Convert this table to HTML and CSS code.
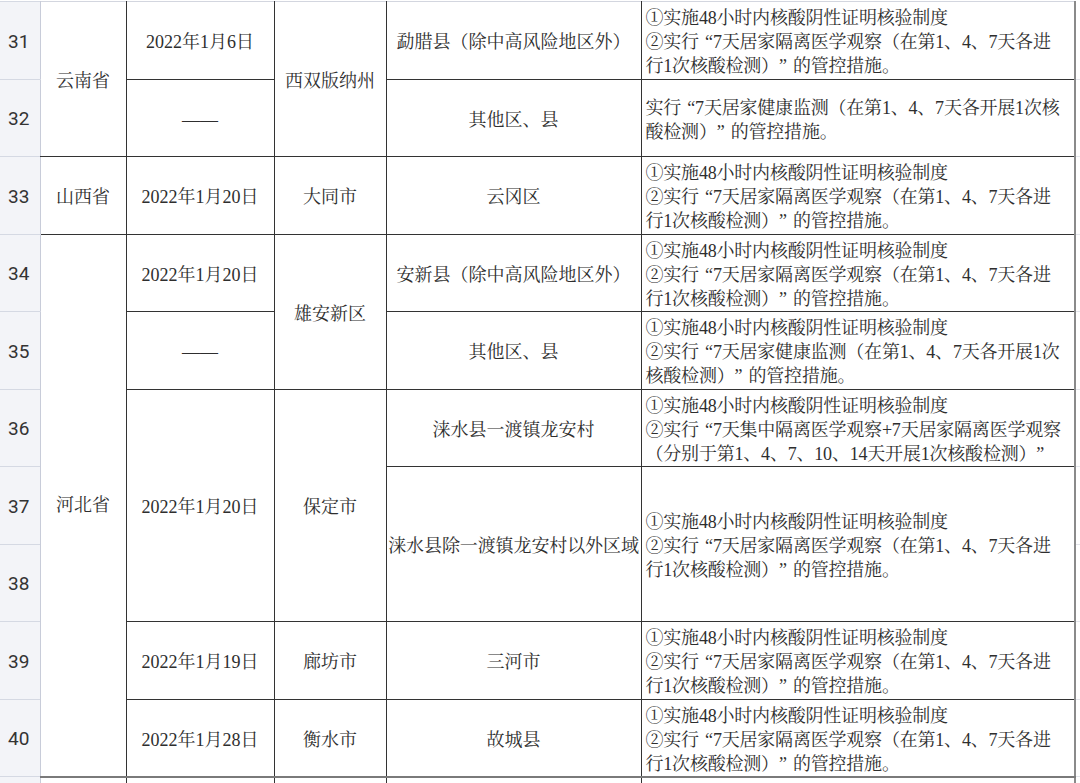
FILE: index.html
```html
<!DOCTYPE html>
<html lang="zh-CN">
<head>
<meta charset="utf-8">
<title>管控措施</title>
<link rel="stylesheet" href="styles.css">
</head>
<body>
<div class="sheet">
<table class="grid">
  <colgroup>
    <col class="c-rh"><col class="c-a"><col class="c-b"><col class="c-c"><col class="c-d"><col class="c-e"><col class="c-x">
  </colgroup>
  <tbody>
    <tr class="r first">
      <th class="rh">31</th>
      <td class="prov" rowspan="2">云南省</td>
      <td class="cen">2022年1月6日</td>
      <td class="cen" rowspan="2">西双版纳州</td>
      <td class="cen">勐腊县（除中高风险地区外）</td>
      <td class="txt">①实施48小时内核酸阴性证明核验制度<br>②实行<span class="ql">“</span>7天居家隔离医学观察（在第1、4、7天各进<br>行1次核酸检测）<span class="qr">”</span>的管控措施。</td>
      <td class="x"></td>
    </tr>
    <tr class="r">
      <th class="rh">32</th>
      <td class="cen">——</td>
      <td class="cen">其他区、县</td>
      <td class="txt">实行<span class="ql">“</span>7天居家健康监测（在第1、4、7天各开展1次核<br>酸检测）<span class="qr">”</span>的管控措施。</td>
      <td class="x"></td>
    </tr>
    <tr class="r">
      <th class="rh">33</th>
      <td class="prov">山西省</td>
      <td class="cen">2022年1月20日</td>
      <td class="cen">大同市</td>
      <td class="cen">云冈区</td>
      <td class="txt">①实施48小时内核酸阴性证明核验制度<br>②实行<span class="ql">“</span>7天居家隔离医学观察（在第1、4、7天各进<br>行1次核酸检测）<span class="qr">”</span>的管控措施。</td>
      <td class="x"></td>
    </tr>
    <tr class="r">
      <th class="rh">34</th>
      <td class="prov hebei" rowspan="7">河北省</td>
      <td class="cen">2022年1月20日</td>
      <td class="cen" rowspan="2">雄安新区</td>
      <td class="cen">安新县（除中高风险地区外）</td>
      <td class="txt">①实施48小时内核酸阴性证明核验制度<br>②实行<span class="ql">“</span>7天居家隔离医学观察（在第1、4、7天各进<br>行1次核酸检测）<span class="qr">”</span>的管控措施。</td>
      <td class="x"></td>
    </tr>
    <tr class="r">
      <th class="rh">35</th>
      <td class="cen">——</td>
      <td class="cen">其他区、县</td>
      <td class="txt">①实施48小时内核酸阴性证明核验制度<br>②实行<span class="ql">“</span>7天居家健康监测（在第1、4、7天各开展1次<br>核酸检测）<span class="qr">”</span>的管控措施。</td>
      <td class="x"></td>
    </tr>
    <tr class="r">
      <th class="rh">36</th>
      <td class="cen" rowspan="3">2022年1月20日</td>
      <td class="cen" rowspan="3">保定市</td>
      <td class="cen">涞水县一渡镇龙安村</td>
      <td class="txt">①实施48小时内核酸阴性证明核验制度<br>②实行<span class="ql">“</span>7天集中隔离医学观察+7天居家隔离医学观察<br>（分别于第1、4、7、10、14天开展1次核酸检测）<span class="qr">”</span></td>
      <td class="x"></td>
    </tr>
    <tr class="r">
      <th class="rh">37</th>
      <td class="cen tight" rowspan="2">涞水县除一渡镇龙安村以外区域</td>
      <td class="txt" rowspan="2">①实施48小时内核酸阴性证明核验制度<br>②实行<span class="ql">“</span>7天居家隔离医学观察（在第1、4、7天各进<br>行1次核酸检测）<span class="qr">”</span>的管控措施。</td>
      <td class="x"></td>
    </tr>
    <tr class="r">
      <th class="rh">38</th>
      <td class="x"></td>
    </tr>
    <tr class="r">
      <th class="rh">39</th>
      <td class="cen">2022年1月19日</td>
      <td class="cen">廊坊市</td>
      <td class="cen">三河市</td>
      <td class="txt">①实施48小时内核酸阴性证明核验制度<br>②实行<span class="ql">“</span>7天居家隔离医学观察（在第1、4、7天各进<br>行1次核酸检测）<span class="qr">”</span>的管控措施。</td>
      <td class="x"></td>
    </tr>
    <tr class="r last">
      <th class="rh">40</th>
      <td class="cen">2022年1月28日</td>
      <td class="cen">衡水市</td>
      <td class="cen">故城县</td>
      <td class="txt">①实施48小时内核酸阴性证明核验制度<br>②实行<span class="ql">“</span>7天居家隔离医学观察（在第1、4、7天各进<br>行1次核酸检测）<span class="qr">”</span>的管控措施。</td>
      <td class="x"></td>
    </tr>
    <tr class="tail">
      <th class="rh"></th>
      <td class="blank"></td>
      <td></td>
      <td></td>
      <td></td>
      <td></td>
      <td class="x"></td>
    </tr>
  </tbody>
</table>
</div>
</body>
</html>
```

FILE: styles.css
```css
html, body {
  margin: 0;
  padding: 0;
  background: #ffffff;
  overflow: hidden;
}

.sheet {
  width: 1080px;
  height: 783px;
  overflow: hidden;
  padding-top: 1px;
  box-sizing: border-box;
}

.grid {
  width: 1080px;
  table-layout: fixed;
  border-collapse: collapse;
  font-family: "Liberation Serif", "Noto Serif CJK SC", "Noto Sans CJK SC", serif;
  font-size: 18px;
  line-height: 24px;
  color: #2e2e2e;
}

.c-rh { width: 40px; }
.c-a { width: 86px; }
.c-b { width: 148px; }
.c-c { width: 112px; }
.c-d { width: 255px; }
.c-e { width: 434px; }
.c-x { width: 5px; }

.r { height: 77.5px; }
.tail { height: 20px; }

.grid td {
  padding: 4px 0 0 0;
  border: 1px solid #333333;
  vertical-align: middle;
  white-space: nowrap;
  overflow: hidden;
}

.first td { border-top: 1px solid #d3d6df; }

.rh {
  background: #f3f4f8;
  border-top: 1px solid #d5d9e3;
  border-bottom: 1px solid #d5d9e3;
  border-right: 1px solid #c8ccd9;
  border-left: none;
  font-family: Roboto, "Noto Sans", sans-serif;
  font-weight: 400;
  font-size: 19px;
  line-height: 24px;
  color: #333333;
  text-align: center;
  padding: 3px 2px 0 0;
}

.grid td.prov {
  text-align: center;
  border-left: 1px solid #c8ccd9;
}

.grid td.hebei {
  padding-top: 0;
}

.cen { text-align: center; }

.tight { letter-spacing: -0.1px; }

.grid td.txt {
  text-align: left;
  padding: 4px 0 0 4px;
  line-height: 24px;
  letter-spacing: -0.2px;
  border-right: 2px solid #8a8a8a;
}

.ql, .qr {
  display: inline-block;
  width: 14px;
  line-height: 1;
}

.ql { text-align: right; }
.qr { text-align: left; }

.grid td.x {
  border: none;
  border-left: 2px solid #8a8a8a;
  border-bottom: 1px solid #e2e4ea;
  background: #ffffff;
  padding: 0;
}

.last td { border-bottom: 2px solid #7a7a7a; }
.last td.x { border-bottom: 1px solid #e2e4ea; }

.tail td { border-top: 2px solid #7a7a7a; border-bottom: none; padding: 0; }
.tail td.blank { border-top: 2px solid #7a7a7a; }
.tail td.x { border-top: 1px solid #e2e4ea; border-left: 2px solid #8a8a8a; }
```
